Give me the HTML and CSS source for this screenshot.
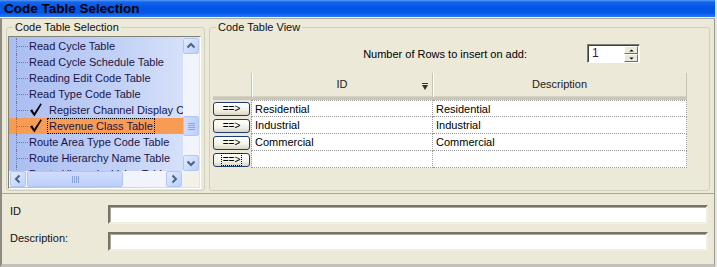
FILE: index.html
```html
<!DOCTYPE html>
<html lang="en">
<head>
  <meta charset="UTF-8">
  <title>Code Table Selection</title>
  <link rel="stylesheet" href="styles.css">
</head>
<body>

<div class="titlebar">Code Table Selection</div>

<div class="window">
  <div class="main">

    <fieldset class="group group-left">
      <legend>Code Table Selection</legend>
      <div class="listbox">
        <ul class="tree">
          <li>Read Cycle Table</li>
          <li>Read Cycle Schedule Table</li>
          <li>Reading Edit Code Table</li>
          <li>Read Type Code Table</li>
          <li class="checked">
            <svg class="check" viewBox="0 0 12 14"><path d="M0 7.5 L2.2 6.3 L4.2 10 L10.6 0.3 L11.8 1.2 L4.4 13.6 Z"/></svg>
            <span>Register Channel Display Code Table</span>
          </li>
          <li class="checked selected">
            <svg class="check" viewBox="0 0 12 14"><path d="M0 7.5 L2.2 6.3 L4.2 10 L10.6 0.3 L11.8 1.2 L4.4 13.6 Z"/></svg>
            <span class="focus">Revenue Class Table</span>
          </li>
          <li>Route Area Type Code Table</li>
          <li>Route Hierarchy Name Table</li>
          <li>Route Hierarchy Value Table</li>
        </ul>

        <div class="vscroll">
          <div class="sbtn">
            <svg viewBox="0 0 14 14"><polyline points="3.5,8.5 7,5 10.5,8.5"/></svg>
          </div>
          <div class="vthumb"><i></i><i></i><i></i><i></i></div>
          <div class="sbtn sbtn-end">
            <svg viewBox="0 0 14 14"><polyline points="3.5,5.5 7,9 10.5,5.5"/></svg>
          </div>
        </div>

        <div class="hscroll">
          <div class="sbtn">
            <svg viewBox="0 0 14 14"><polyline points="8.5,3.5 5,7 8.5,10.5"/></svg>
          </div>
          <div class="hthumb"><i></i><i></i><i></i><i></i></div>
          <div class="sbtn sbtn-end">
            <svg viewBox="0 0 14 14"><polyline points="5.5,3.5 9,7 5.5,10.5"/></svg>
          </div>
        </div>

        <div class="corner"></div>
      </div>
    </fieldset>

    <fieldset class="group group-right">
      <legend>Code Table View</legend>

      <div class="rows-add">
        <span>Number of Rows to insert on add:</span>
        <div class="spinner">
          <span class="spin-value">1</span>
          <span class="spin-btns">
            <span class="spin-btn"><svg viewBox="0 0 7 4"><path d="M0.5 3.5 L3.5 0.5 L6.5 3.5 Z"/></svg></span>
            <span class="spin-btn"><svg viewBox="0 0 7 4"><path d="M0.5 0.5 L3.5 3.5 L6.5 0.5 Z"/></svg></span>
          </span>
        </div>
      </div>

      <div class="grid">
        <div class="hcell hcell-corner"></div>
        <div class="hcell">ID
          <svg class="filter" viewBox="0 0 6 7"><path d="M0 0 H6 V1 H0 Z M0 2 H6 L3 7 Z"/></svg>
        </div>
        <div class="hcell hcell-last">Description</div>

        <div class="rowhead"><button class="go">==&gt;</button></div>
        <div class="cell">Residential</div>
        <div class="cell">Residential</div>

        <div class="rowhead"><button class="go">==&gt;</button></div>
        <div class="cell">Industrial</div>
        <div class="cell">Industrial</div>

        <div class="rowhead"><button class="go">==&gt;</button></div>
        <div class="cell">Commercial</div>
        <div class="cell">Commercial</div>

        <div class="rowhead"><button class="go go-focus"><span>==&gt;</span></button></div>
        <div class="cell"></div>
        <div class="cell"></div>
      </div>
    </fieldset>

  </div>

  <div class="details">
    <label>ID</label>
    <div class="textbox"></div>
    <label>Description:</label>
    <div class="textbox"></div>
  </div>
</div>

</body>
</html>
```

FILE: styles.css
```css
* {
  box-sizing: border-box;
}

body {
  margin: 0;
  width: 717px;
  height: 267px;
  overflow: hidden;
  background-color: #e6e5df;
  font-family: 'Liberation Sans', Arial, sans-serif;
  font-size: 11px;
  color: #000;
}

.titlebar {
  width: 715px;
  height: 18px;
  padding-left: 4px;
  line-height: 17px;
  font-size: 13.5px;
  font-weight: bold;
  color: #000;
  background: linear-gradient(#5a9cf8 0, #1464ee 2px, #0055e6 8px, #0457ea 13px, #2a78f2 17px);
  border-bottom: 1px solid #f4f3ee;
}

.window {
  width: 715px;
  height: 249px;
  background-color: #ece9d8;
  border-top: 1px solid #aca899;
  border-left: 2px solid #8e8c80;
  border-right: 1px solid #9d9b8f;
  border-bottom: 3px solid #c2c0b8;
}

.main {
  display: flex;
  gap: 4px;
  height: 174px;
  padding: 2px 0 0 4px;
}

/* group boxes */
.group {
  margin: 0;
  padding: 0;
  height: 170px;
  border: 1px solid #d0d0bf;
  border-radius: 3px;
}

.group legend {
  margin-left: 6px;
  padding: 0 2px;
  line-height: 13px;
  color: #111;
}

.group-left {
  width: 199px;
}

.group-right {
  width: 501px;
}

/* tree list */
.listbox {
  display: grid;
  grid-template-columns: 174px 16px;
  grid-template-rows: 133px 16px;
  width: 193px;
  height: 153px;
  margin: 2px 0 0 1px;
  padding: 1px 1px 1px 0;
  border: 1px solid;
  border-color: #828176 #fff #fff #828176;
  background: linear-gradient(90deg, #a9bdf1, #c3d2f6 60%, #dbe4fa);
}

.tree {
  position: relative;
  margin: 0;
  padding: 0;
  list-style: none;
  overflow: hidden;
  color: #1a1446;
}

.tree li {
  position: relative;
  display: flex;
  align-items: center;
  height: 16px;
  padding-left: 20px;
  white-space: nowrap;
}

.tree li::before {
  content: '';
  position: absolute;
  left: 7px;
  top: 0;
  bottom: 0;
  border-left: 1px dotted #7a7a8a;
}

.tree li::after {
  content: '';
  position: absolute;
  left: 8px;
  top: 8px;
  width: 11px;
  border-top: 1px dotted #7a7a8a;
}

.tree li.selected {
  background-color: #f89b55;
}

.check {
  width: 12px;
  height: 14px;
  margin: 0 7px 0 1px;
  fill: #000;
  flex: none;
}

.focus {
  outline: 1px dotted #000;
  outline-offset: 0;
  padding: 0 1px;
  margin-left: -1px;
  line-height: 14px;
}

/* scrollbars */
.vscroll {
  display: flex;
  flex-direction: column;
  background-color: #f1f4fb;
}

.hscroll {
  display: flex;
  align-items: stretch;
  padding-left: 1px;
  padding-right: 1px;
  background-color: #f1f4fb;
}

.corner {
  background-color: #f3f1e8;
}

.sbtn {
  width: 16px;
  height: 16px;
  flex: none;
  border: 1px solid #b3c6f2;
  border-radius: 2px;
  background: linear-gradient(135deg, #e3ebfe, #bccffa);
}

.sbtn svg {
  display: block;
  width: 14px;
  height: 14px;
  fill: none;
  stroke: #4d6185;
  stroke-width: 2;
}

.vscroll .sbtn-end {
  margin-top: auto;
}

.hscroll .sbtn-end {
  margin-left: auto;
}

.vthumb,
.hthumb {
  display: flex;
  align-items: center;
  justify-content: center;
  gap: 1px;
  border: 1px solid #b3c6f2;
  border-radius: 2px;
  background: linear-gradient(90deg, #cfdcfd, #bdcffb);
}

.vthumb {
  flex-direction: column;
  height: 20px;
  margin-top: 62px;
}

.vthumb i {
  width: 7px;
  height: 1px;
  background-color: #8ca4da;
}

.hthumb {
  width: 96px;
  margin-left: 1px;
  background: linear-gradient(#cfdcfd, #bdcffb);
}

.hthumb i {
  width: 1px;
  height: 7px;
  background-color: #8ca4da;
}

/* rows to add */
.rows-add {
  display: flex;
  align-items: center;
  justify-content: flex-end;
  gap: 60px;
  margin-top: 10px;
  padding-right: 69px;
}

.spinner {
  display: flex;
  width: 53px;
  height: 19px;
  border: 1px solid;
  border-color: #7f7d72 #fff #fff #7f7d72;
  box-shadow: inset 1px 1px 0 #404040;
  background-color: #fff;
}

.spin-value {
  flex: 1;
  padding: 1px 0 0 4px;
  color: #3b1468;
  font-size: 12px;
}

.spin-btns {
  display: flex;
  flex-direction: column;
  width: 15px;
  padding: 1px 1px 0 0;
}

.spin-btn {
  display: flex;
  align-items: center;
  justify-content: center;
  height: 8px;
  background-color: #ece9d8;
  border: 1px solid;
  border-color: #fff #716f64 #716f64 #fff;
}

.spin-btn svg {
  width: 5px;
  height: 3px;
  fill: #000;
}

/* grid */
.grid {
  display: grid;
  grid-template-columns: 39px 181px 254px;
  grid-template-rows: 27px repeat(4, 17px);
  margin: 10px 0 0 3px;
}

.hcell {
  position: relative;
  display: flex;
  align-items: center;
  justify-content: center;
  padding-bottom: 3px;
  border-right: 1px solid #c7c5b2;
  border-bottom: 3px solid #cbc7b8;
  box-shadow: inset 1px 0 0 #fff, inset 0 -1px 0 #d6d2c2;
  color: #222;
}

.hcell-corner {
  box-shadow: inset 0 -1px 0 #d6d2c2;
}

.filter {
  position: absolute;
  right: 4px;
  top: 10px;
  width: 6px;
  height: 7px;
  fill: #333;
}

.rowhead {
  display: flex;
  align-items: center;
  border-right: 1px dotted #9a9a9a;
}

.rowhead:nth-child(4) {
  padding-top: 1px;
}

.cell {
  padding: 1px 0 0 3px;
  line-height: 15px;
  background-color: #fff;
  border-right: 1px dotted #9a9a9a;
  border-bottom: 1px dotted #9a9a9a;
}

.cell:nth-child(5),
.cell:nth-child(6) {
  border-top: 1px dotted #9a9a9a;
}

.go {
  width: 37px;
  height: 14px;
  padding: 0;
  font-family: 'Liberation Sans', Arial, sans-serif;
  font-size: 10px;
  line-height: 12px;
  color: #000;
  border: 1px solid #1c3c74;
  border-radius: 3px;
  background: linear-gradient(#fff, #f3f2ea 60%, #d8d5c6);
  outline: none;
}

.go-focus span {
  outline: 1px dotted #000;
  padding: 0 1px;
}

/* bottom detail fields */
.details {
  display: grid;
  grid-template-columns: 98px 600px;
  grid-template-rows: 19px 19px;
  row-gap: 8px;
  height: 71px;
  padding: 11px 0 0 8px;
  border-top: 1px solid #aca899;
}

.details label {
  align-self: start;
  line-height: 13px;
  color: #111;
}

.textbox {
  background-color: #fff;
  border: 2px solid;
  border-color: #76746a #f1efe2 #f1efe2 #76746a;
  box-shadow: inset 1px 1px 0 #aca899;
}
```
